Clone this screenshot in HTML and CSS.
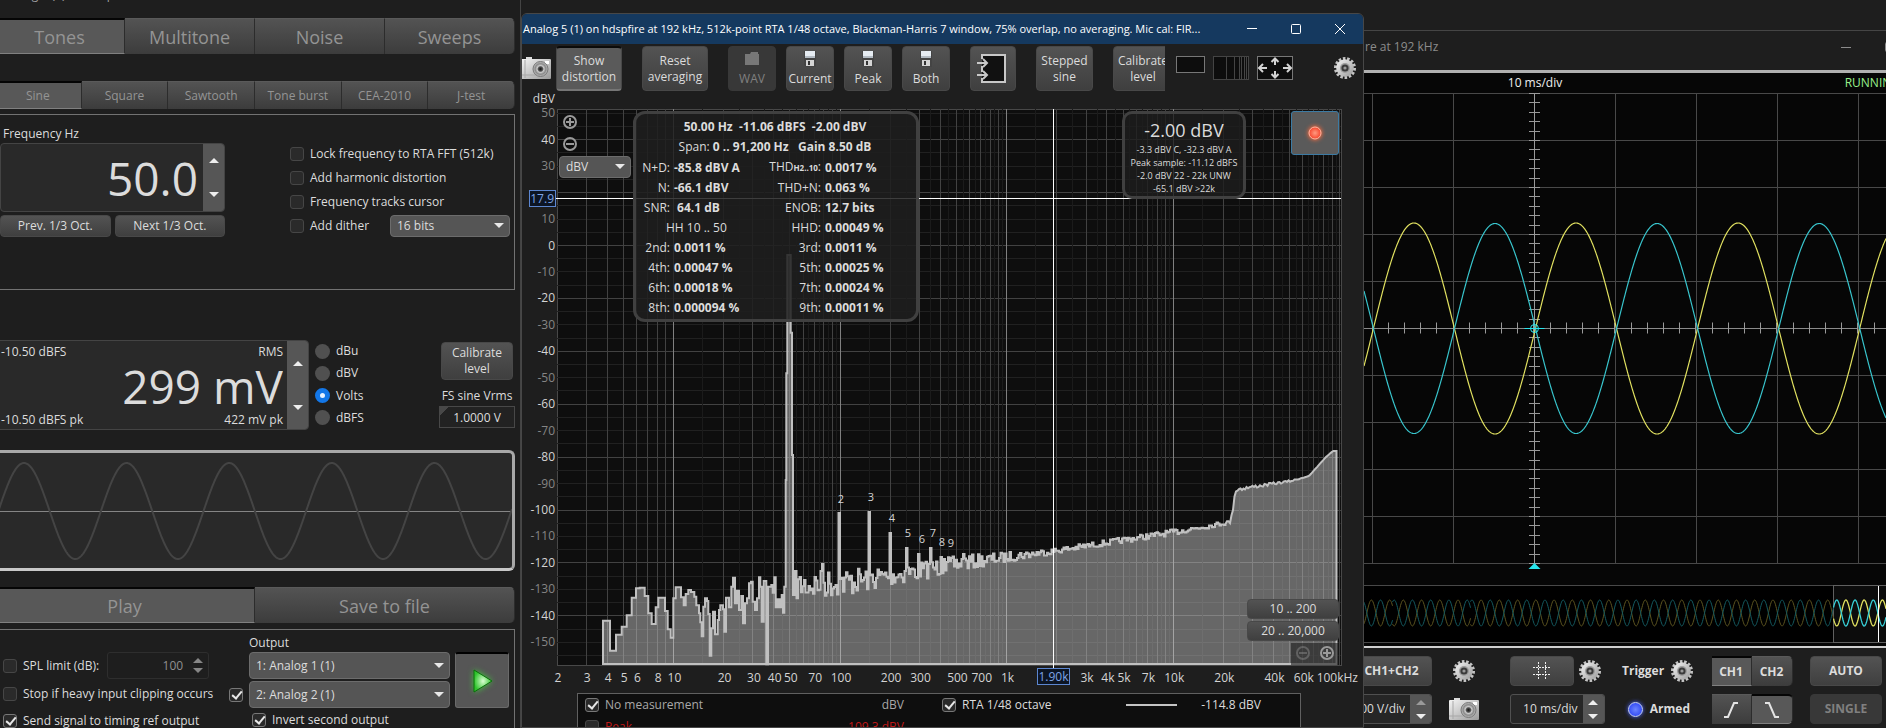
FILE: index.html
```html
<!DOCTYPE html>
<html lang="en">
<head>
  <meta charset="UTF-8" />
  <meta name="viewport" content="width=device-width, initial-scale=1.0" />
  <title>Generator / RTA / Scope</title>
  <link rel="stylesheet" href="styles.css">
</head>
<body>

<svg class="defs" aria-hidden="true">
  <defs>
    <linearGradient id="metal" x1="0" y1="0" x2="1" y2="1">
      <stop offset="0" stop-color="#f4f4f4" />
      <stop offset="1" stop-color="#9a9a9a" />
    </linearGradient>
    <radialGradient id="lens">
      <stop offset="0" stop-color="#111" />
      <stop offset="0.3" stop-color="#555" />
      <stop offset="0.45" stop-color="#ccc" />
      <stop offset="0.7" stop-color="#8a8a8a" />
      <stop offset="1" stop-color="#c4c4c4" />
    </radialGradient>
    <radialGradient id="green">
      <stop offset="0" stop-color="#d8ffd0" />
      <stop offset="1" stop-color="#2fc42c" />
    </radialGradient>
    <radialGradient id="red">
      <stop offset="0" stop-color="#ff9a80" />
      <stop offset="1" stop-color="#f5452c" />
    </radialGradient>
  </defs>
  <symbol id="gear" viewBox="0 0 24 24">
    <circle cx="12" cy="12" r="9.5" fill="none" stroke="#c4c4c4" stroke-width="3" pathLength="28" stroke-dasharray="1.2 0.8" />
    <circle cx="12" cy="12" r="8.8" fill="url(#metal)" />
    <circle cx="12" cy="12" r="5" fill="#9c9c9c" />
    <circle cx="12" cy="12" r="3.6" fill="#3a3a3a" />
    <circle cx="12" cy="12" r="1.6" fill="#999" />
  </symbol>
  <symbol id="camera" viewBox="0 0 30 22">
    <rect x="5" y="0" width="6" height="4" fill="#ddd" />
    <rect x="0" y="2" width="30" height="20" rx="1" fill="url(#metal)" />
    <path d="M4 3v18M0 18h30" stroke="#a8a8a8" fill="none" />
    <rect x="24" y="4" width="4" height="3" fill="#fff" />
    <circle cx="19.500" cy="12" r="7.500" fill="url(#lens)" stroke="#777" />
  </symbol>
  <symbol id="disk" viewBox="0 0 14 16">
    <path d="M1 0h12v16H3l-2-2z" fill="#444" />
    <rect x="2" y="0" width="10" height="7" fill="#e6ecf2" />
    <rect x="2" y="5" width="10" height="2" fill="#b4bcc4" />
    <rect x="3" y="9" width="8" height="6" fill="#d4d4d4" />
    <rect x="5" y="10" width="2" height="4" fill="#333" />
  </symbol>
</svg>

<main class="desktop">

  <!-- Signal generator -->
  <section class="generator">
    <div class="generator-title">Analog 1 (1) on hdspfire at 192 kHz</div>

    <div class="tabs tabs-big">
      <button class="tab active">Tones</button>
      <button class="tab">Multitone</button>
      <button class="tab">Noise</button>
      <button class="tab">Sweeps</button>
    </div>
    <div class="tabs tabs-small">
      <button class="tab active">Sine</button>
      <button class="tab">Square</button>
      <button class="tab">Sawtooth</button>
      <button class="tab">Tone burst</button>
      <button class="tab">CEA-2010</button>
      <button class="tab">J-test</button>
    </div>

    <div class="panel tone-panel">
      <div class="frequency">
        <label for="frequency">Frequency Hz</label>
        <div class="big-field">
          <input id="frequency" class="big-value" type="text" value="50.0">
          <div class="spinner"><button class="up" aria-label="Frequency up"></button><button class="down" aria-label="Frequency down"></button></div>
        </div>
        <div class="octaves">
          <button class="btn">Prev. 1/3 Oct.</button>
          <button class="btn">Next 1/3 Oct.</button>
        </div>
      </div>
      <div class="tone-options">
        <label class="check"><input type="checkbox">Lock frequency to RTA FFT (512k)</label>
        <label class="check"><input type="checkbox">Add harmonic distortion</label>
        <label class="check"><input type="checkbox">Frequency tracks cursor</label>
        <div class="dither">
          <label class="check"><input type="checkbox">Add dither</label>
          <div class="select"><select aria-label="Dither bits"><option>16 bits</option></select></div>
        </div>
      </div>
    </div>

    <div class="level">
      <div class="big-field level-field">
        <div class="level-text">
          <div class="level-row"><span>-10.50 dBFS</span><span>RMS</span></div>
          <input class="big-value" type="text" value="299 mV" aria-label="Level">
          <div class="level-row"><span>-10.50 dBFS pk</span><span>422 mV pk</span></div>
        </div>
        <div class="spinner"><button class="up" aria-label="Level up"></button><button class="down" aria-label="Level down"></button></div>
      </div>
      <div class="units">
        <label class="radio"><input type="radio" name="unit">dBu</label>
        <label class="radio"><input type="radio" name="unit">dBV</label>
        <label class="radio"><input type="radio" name="unit" checked>Volts</label>
        <label class="radio"><input type="radio" name="unit">dBFS</label>
      </div>
      <div class="calibration">
        <button class="btn">Calibrate<br>level</button>
        <label for="vrms">FS sine Vrms</label>
        <input id="vrms" type="text" value="1.0000 V">
      </div>
    </div>

    <div class="preview"><svg id="preview"></svg></div>

    <div class="tabs tabs-big tabs-play">
      <button class="tab active">Play</button>
      <button class="tab">Save to file</button>
    </div>

    <div class="panel play-panel">
      <div class="play-options">
        <div class="spl">
          <label class="check"><input type="checkbox">SPL limit (dB):</label>
          <div class="spl-field"><input type="text" value="100" aria-label="SPL limit" disabled><div class="mini-spin"><i class="up"></i><i class="down"></i></div></div>
        </div>
        <label class="check"><input type="checkbox">Stop if heavy input clipping occurs</label>
        <label class="check"><input type="checkbox" checked>Send signal to timing ref output</label>
      </div>
      <div class="outputs">
        <label class="output-label" for="output1">Output</label>
        <div class="select"><select id="output1"><option>1: Analog 1 (1)</option></select></div>
        <div class="second">
          <input type="checkbox" checked aria-label="Use second output">
          <div class="select"><select aria-label="Second output"><option>2: Analog 2 (1)</option></select></div>
        </div>
        <label class="check invert"><input type="checkbox" checked>Invert second output</label>
      </div>
      <button class="play" aria-label="Play">
        <svg width="36" height="36" viewBox="0 0 36 36"><path class="play-glow" d="M10 7v22l18-11z" /><path d="M10 7v22l18-11z" fill="url(#green)" stroke="#0a6e0a" /></svg>
      </button>
    </div>
  </section>

  <!-- RTA -->
  <section class="rta">
    <header class="titlebar">
      <h1>Analog 5 (1) on hdspfire at 192 kHz, 512k-point RTA 1/48 octave, Blackman-Harris 7 window, 75% overlap, no averaging. Mic cal: FIR...</h1>
      <div class="window-buttons">
        <button aria-label="Minimize"><svg width="12" height="12"><path d="M1 5.500h10" /></svg></button>
        <button aria-label="Maximize"><svg width="12" height="12"><rect x="1.500" y="1.500" width="9" height="9" rx="1" /></svg></button>
        <button aria-label="Close"><svg width="12" height="12"><path d="M1 1l10 10M11 1L1 11" /></svg></button>
      </div>
    </header>

    <div class="toolbar">
      <svg class="camera" width="30" height="22"><use href="#camera" /></svg>
      <button class="btn show active">Show<br>distortion</button>
      <button class="btn reset">Reset<br>averaging</button>
      <div class="files">
        <button class="btn file" disabled><svg width="16" height="16"><path d="M1 3h5l1-2h7v2h1v11H1z" fill="#777" /></svg>WAV</button>
        <button class="btn file"><svg width="14" height="16"><use href="#disk" /></svg>Current</button>
        <button class="btn file"><svg width="14" height="16"><use href="#disk" /></svg>Peak</button>
        <button class="btn file"><svg width="14" height="16"><use href="#disk" /></svg>Both</button>
      </div>
      <button class="btn input" aria-label="Input">
        <svg width="32" height="32"><rect x="5" y="2" width="24" height="28" fill="#111" /><path d="M5 6V2h23v27H5v-4M5 13v6" fill="none" stroke="#c8c8c8" stroke-width="2" /><path d="M0 10h9M6 6l4 4-4 4M0 22h9M6 18l4 4-4 4" fill="none" stroke="#c8c8c8" stroke-width="2" /></svg>
      </button>
      <button class="btn stepped">Stepped<br>sine</button>
      <div class="clipped"><button class="btn">Calibrate<br>level</button></div>
      <div class="views">
        <svg width="29" height="17"><rect x="0.500" y="0.500" width="28" height="16" fill="#0d0d0d" stroke="#777" /></svg>
        <svg width="36" height="24"><rect x="0.500" y="0.500" width="35" height="23" fill="#0d0d0d" stroke="#444" /><path d="M13.500 0v24M21.500 0v24M26.500 0v24M28.500 0v24M31.500 0v24M33.500 0v24" stroke="#444" /></svg>
        <svg width="36" height="24"><rect x="0.500" y="0.500" width="35" height="23" fill="#0d0d0d" stroke="#777" /><path d="M3 12h7M6 8l-4 4 4 4M33 12h-7M30 8l4 4-4 4M18 3v6M14.500 6L18 2.500 21.500 6M18 21v-6M14.500 18l3.500 3.500 3.500-3.500" fill="none" stroke="#d4d4d4" stroke-width="2" /></svg>
      </div>
      <svg class="settings" width="24" height="24"><use href="#gear" /></svg>
    </div>

    <div class="chart">
      <svg id="spectrum"></svg>

      <div class="y-tools">
        <button aria-label="Zoom in"><svg width="16" height="16"><circle cx="8" cy="8" r="6" /><path d="M8 4v8M4 8h8" /></svg></button>
        <button aria-label="Zoom out"><svg width="16" height="16"><circle cx="8" cy="8" r="6" /><path d="M4 8h8" /></svg></button>
        <div class="select"><select aria-label="Axis unit"><option>dBV</option></select></div>
      </div>

      <div class="distortion">
        <p><b>50.00 Hz&nbsp; -11.06 dBFS&nbsp; -2.00 dBV</b></p>
        <p>Span: <b>0 .. 91,200 Hz &nbsp; Gain 8.50 dB</b></p>
        <table>
          <tr><th>N+D:</th><td>-85.8 dBV A</td><th>THD<small>H2..10</small>:</th><td>0.0017 %</td></tr>
          <tr><th>N:</th><td>-66.1 dBV</td><th>THD+N:</th><td>0.063 %</td></tr>
          <tr><th>SNR:</th><td>&nbsp;64.1 dB</td><th>ENOB:</th><td>12.7 bits</td></tr>
          <tr><td class="range" colspan="2">HH 10 .. 50</td><th>HHD:</th><td>0.00049 %</td></tr>
          <tr><th>2nd:</th><td>0.0011 %</td><th>3rd:</th><td>0.0011 %</td></tr>
          <tr><th>4th:</th><td>0.00047 %</td><th>5th:</th><td>0.00025 %</td></tr>
          <tr><th>6th:</th><td>0.00018 %</td><th>7th:</th><td>0.00024 %</td></tr>
          <tr><th>8th:</th><td>0.000094 %</td><th>9th:</th><td>0.00011 %</td></tr>
        </table>
      </div>

      <div class="levels">
        <strong>-2.00 dBV</strong>
        <span>-3.3 dBV C, -32.3 dBV A</span>
        <span>Peak sample: -11.12 dBFS</span>
        <span>-2.0 dBV 22 - 22k UNW</span>
        <span>-65.1 dBV &gt;22k</span>
      </div>

      <button class="record" aria-label="Record"><svg width="24" height="24"><circle class="record-glow" cx="12" cy="12" r="7" /><circle cx="12" cy="12" r="6" fill="url(#red)" stroke="#ffb8a4" /></svg></button>

      <div class="ranges">
        <button class="btn">10 .. 200</button>
        <button class="btn">20 .. 20,000</button>
        <div class="x-zoom">
          <button class="dim" aria-label="Zoom out"><svg width="16" height="16"><circle cx="8" cy="8" r="6" /><path d="M4 8h8" /></svg></button>
          <button aria-label="Zoom in"><svg width="16" height="16"><circle cx="8" cy="8" r="6" /><path d="M8 4v8M4 8h8" /></svg></button>
        </div>
      </div>
    </div>

    <div class="legend">
      <label class="check muted"><input type="checkbox" checked>No measurement</label>
      <span class="reading muted">dBV</span>
      <label class="check"><input type="checkbox" checked>RTA 1/48 octave</label>
      <span class="swatch"></span>
      <span class="reading">-114.8 dBV</span>
      <label class="check peak"><input type="checkbox">Peak</label>
      <span class="reading peak">-109.3 dBV</span>
    </div>
  </section>

  <!-- Oscilloscope -->
  <section class="scope">
    <header class="scope-title">
      <h2>re at 192 kHz</h2>
      <button aria-label="Minimize"><svg width="12" height="12"><path d="M1 6.500h10" /></svg></button>
      <button aria-label="Maximize"><svg width="12" height="12"><rect x="1.500" y="1.500" width="9" height="9" rx="1" /></svg></button>
    </header>
    <div class="screen">
      <div class="screen-head"><span>10 ms/div</span><span class="running">RUNNING</span></div>
      <svg id="scope"></svg>
      <svg id="overview"></svg>
    </div>
    <div class="scope-controls">
      <div class="group group-a">
        <button class="btn sum">CH1+CH2</button>
        <svg class="icon" width="24" height="24"><use href="#gear" /></svg>
        <div class="step-field volts"><input type="text" value="100 V/div" aria-label="Volts per division"><div class="spinner"><button class="up dim" aria-label="Up"></button><button class="down" aria-label="Down"></button></div></div>
        <svg class="icon" width="30" height="22"><use href="#camera" /></svg>
      </div>
      <div class="group group-b">
        <div class="line">
          <button class="btn grid-btn" aria-label="Grid"><svg width="18" height="18"><path d="M5.500 0v18M12.500 0v18M0 5.500h18M0 12.500h18" stroke="#eee" stroke-dasharray="2 1" /></svg></button>
          <svg width="24" height="24"><use href="#gear" /></svg>
        </div>
        <div class="step-field"><input type="text" value="10 ms/div" aria-label="Time per division"><div class="spinner"><button class="up" aria-label="Up"></button><button class="down" aria-label="Down"></button></div></div>
      </div>
      <div class="group group-c">
        <div class="line"><b>Trigger</b><svg width="24" height="24"><use href="#gear" /></svg></div>
        <div class="line armed"><i class="led"></i><b>Armed</b></div>
      </div>
      <div class="group group-d">
        <div class="pair"><button class="tab active">CH1</button><button class="tab">CH2</button></div>
        <div class="pair">
          <button class="tab" aria-label="Rising edge"><svg width="16" height="16"><path d="M1 15h4L11 1h4" /></svg></button>
          <button class="tab active" aria-label="Falling edge"><svg width="16" height="16"><path d="M1 1h4l6 14h4" /></svg></button>
        </div>
      </div>
      <div class="group group-e">
        <button class="btn">AUTO</button>
        <button class="btn" disabled>SINGLE</button>
      </div>
    </div>
  </section>

</main>

<script src="script.js"></script>
</body>
</html>
```
FILE: styles.css
```css
* {
  box-sizing: border-box;
}
body {
  margin: 0;
  height: 100vh;
  overflow: hidden;
  background: #1e1e1e;
  color: #dcdcdc;
  font-family: "Open Sans", "Noto Sans", sans-serif;
  font-size: 12px;
  line-height: 16px;
}
h1, h2, p {
  margin: 0;
  font-size: 12px;
  font-weight: normal;
}
svg {
  display: block;
  flex: none;
}
button, input, select {
  font: inherit;
  color: inherit;
  margin: 0;
  padding: 0;
  border: none;
  background: none;
  min-width: 0;
}
.defs {
  position: absolute;
  width: 0;
  height: 0;
}
.desktop {
  display: grid;
  grid-template-columns: minmax(0, 521fr) minmax(0, 843fr) minmax(0, 522fr);
  height: 100vh;
  overflow: hidden;
}

/* shared controls */
.btn {
  border-radius: 4px;
  background: linear-gradient(#535353, #3f3f3f);
  border: 1px solid #484848;
  white-space: nowrap;
}
.btn:disabled {
  color: #808080;
  background: #383838;
  border-color: #383838;
}
.btn.active {
  background: #5a5a5a;
  border-top: 2px solid #0a0a0a;
  border-bottom: 2px solid #767676;
}
.tab {
  background: linear-gradient(#535353, #3c3c3c);
  border-top: 1px solid #5a5a5a;
  border-right: 1px solid #2c2c2c;
}
.tab:last-child {
  border-radius: 0 5px 5px 0;
}
.tab.active {
  background: #585858;
  border-top: 2px solid #050505;
  border-bottom: 1px solid #808080;
}
.tabs {
  display: grid;
  grid-auto-flow: column;
  grid-auto-columns: 1fr;
  color: #949494;
}
.tabs-big {
  height: 36px;
  font-size: 18px;
}
.tabs-small {
  height: 28px;
  margin: 27px 0 5px;
}
.check, .radio {
  display: flex;
  align-items: center;
  gap: 6px;
  white-space: nowrap;
}
input[type=checkbox] {
  appearance: none;
  flex: none;
  width: 14px;
  height: 14px;
  border: 1px solid #464646;
  border-radius: 3px;
  background: #2a2a2a;
}
input[type=checkbox]:checked {
  border-color: #777;
}
input[type=checkbox]:checked::before {
  content: "";
  display: block;
  width: 4px;
  height: 8px;
  margin: 0 0 0 4px;
  border: solid #e8e8e8;
  border-width: 0 2px 2px 0;
  transform: rotate(40deg);
}
input[type=radio] {
  appearance: none;
  flex: none;
  width: 15px;
  height: 15px;
  border-radius: 50%;
  background: #505050;
}
input[type=radio]:checked {
  background: #e8f2ff;
  border: 5px solid #1377e8;
}
.select {
  position: relative;
  border: 1px solid #6c6c6c;
  border-radius: 4px;
  background: #555;
}
.select select {
  appearance: none;
  display: block;
  width: 100%;
  height: 100%;
  padding: 0 20px 0 6px;
}
.select::after {
  content: "";
  position: absolute;
  right: 5px;
  top: 50%;
  margin-top: -3px;
  border: 5px solid transparent;
  border-top-color: #e8e8e8;
  border-bottom: none;
}
.spinner {
  display: flex;
  flex-direction: column;
  flex: none;
  width: 21px;
  background: #565656;
}
.spinner button {
  flex: 1;
  display: grid;
  place-items: center;
}
.up::before, .down::before {
  content: "";
  display: block;
  border: 5px solid transparent;
}
.up::before {
  border-bottom-color: #eee;
  border-top: none;
}
.down::before {
  border-top-color: #eee;
  border-bottom: none;
}
.panel {
  border: 1px solid #727272;
}

/* generator */
.generator {
  margin-left: -5px;
  padding-right: 5px;
  border-right: 1px solid #444;
  overflow: hidden;
}
.generator-title {
  height: 18px;
  margin-top: -13px;
  margin-bottom: 13px;
  padding-left: 5px;
  color: #a0a0a0;
}
.tone-panel {
  display: flex;
  justify-content: space-between;
  height: 176px;
  padding: 11px 4px 0;
}
.frequency {
  width: 225px;
}
.frequency label {
  display: block;
  height: 17px;
  padding-left: 3px;
}
.big-field {
  display: flex;
  height: 69px;
  border: 1px solid #444;
  border-radius: 4px;
  background: #292929;
  overflow: hidden;
}
.big-value {
  flex: 1;
  width: 100%;
  padding-right: 5px;
  text-align: right;
  font-size: 46px;
  line-height: 50px;
}
.octaves {
  display: grid;
  grid-template-columns: 1fr 1fr;
  gap: 4px;
  height: 22px;
  margin-top: 3px;
}
.tone-options {
  width: 220px;
  padding-top: 16px;
}
.tone-options .check {
  height: 24px;
}
.dither {
  display: flex;
  align-items: center;
  justify-content: space-between;
}
.dither .select {
  width: 120px;
  height: 22px;
}
.level {
  display: flex;
  gap: 6px;
  height: 90px;
  margin: 50px 0 20px;
}
.level-field {
  flex: 1;
  height: 90px;
}
.level-text {
  flex: 1;
  display: flex;
  flex-direction: column;
  padding: 3px 4px 0 5px;
}
.level-text .big-value {
  flex: none;
  height: 52px;
  padding: 0;
}
.level-row {
  display: flex;
  justify-content: space-between;
}
.units {
  width: 118px;
  display: flex;
  flex-direction: column;
  justify-content: space-between;
  padding: 3px 0 4px;
}
.calibration {
  width: 76px;
  display: flex;
  flex-direction: column;
  align-items: center;
  padding-top: 2px;
}
.calibration .btn {
  width: 72px;
  height: 38px;
}
.calibration label {
  margin: 8px 0 2px;
  white-space: nowrap;
}
.calibration input {
  width: 100%;
  height: 22px;
  border: 1px solid #484848;
  background: linear-gradient(135deg, #484848 6px, #222 6px);
  text-align: center;
}
.preview {
  height: 121px;
  border: 3px solid #a8a8a8;
  border-bottom-color: #c8c8c8;
  border-radius: 6px;
  background: #292929;
}
#preview {
  width: 100%;
  height: 115px;
}
.tabs-play {
  margin: 16px 0 6px;
}
.play-panel {
  display: flex;
  height: 140px;
  padding: 5px 5px 0 7px;
}
.play-options {
  flex: 1;
  padding-top: 17px;
}
.play-options .check {
  height: 24px;
}
.play-options > .check {
  margin-top: 3px;
}
.spl {
  display: flex;
  align-items: center;
  gap: 8px;
  height: 27px;
}
.spl-field {
  display: flex;
  align-items: center;
  width: 102px;
  height: 27px;
  padding-right: 5px;
  border: 1px solid #2e2e2e;
  border-radius: 3px;
  color: #909090;
}
.spl-field input {
  flex: 1;
  padding-right: 10px;
  text-align: right;
}
.mini-spin {
  display: grid;
  gap: 5px;
  opacity: 0.5;
}
.outputs {
  width: 221px;
  padding-left: 20px;
}
.output-label {
  display: block;
  height: 17px;
}
.outputs .select {
  height: 27px;
}
.second {
  display: flex;
  align-items: center;
  gap: 6px;
  margin: 2px 0 0 -20px;
}
.second .select {
  flex: 1;
}
.invert {
  height: 24px;
  padding-left: 3px;
}
.play {
  display: grid;
  place-items: center;
  width: 54px;
  height: 56px;
  margin: 17px 0 0 5px;
  border: 1px solid #6a6a6a;
  border-top: 2px solid #000;
  border-radius: 3px;
  background: #565656;
}
.play-glow {
  fill: #3fd43a;
  filter: blur(3px);
}

/* RTA */
.rta {
  margin-top: 13px;
  border: 1px solid #474747;
  border-radius: 6px 6px 0 0;
  background: #1e1e1e;
  overflow: hidden;
}
.titlebar {
  display: flex;
  align-items: center;
  justify-content: space-between;
  height: 30px;
  padding: 0 1px;
  background: #15395f;
  color: #fff;
}
.titlebar h1 {
  font-size: 11px;
  white-space: nowrap;
}
.window-buttons {
  display: flex;
  flex: none;
}
.window-buttons button {
  width: 44px;
  display: grid;
  place-items: center;
}
.window-buttons svg, .scope-title svg {
  fill: none;
  stroke: currentColor;
}
.toolbar {
  display: flex;
  align-items: flex-start;
  height: 48px;
  padding-top: 2px;
}
.toolbar .btn {
  height: 45px;
}
.toolbar .camera {
  margin: 11px 5px 0 -1px;
}
.show, .reset {
  width: 66px;
}
.reset {
  margin: 0 20px;
}
.files {
  display: flex;
  gap: 10px;
}
.file {
  width: 48px;
  display: flex;
  flex-direction: column;
  align-items: center;
  gap: 4px;
  padding-top: 4px;
}
.input {
  display: grid;
  place-items: center;
  width: 46px;
  margin: 0 20px;
}
.stepped {
  width: 57px;
}
.clipped {
  width: 52px;
  margin-left: 20px;
  overflow: hidden;
}
.clipped .btn {
  width: 60px;
}
.views {
  display: flex;
  gap: 8px;
  margin: 10px 0 0 11px;
}
.settings {
  margin: 10px 6px 0 auto;
}
.chart {
  position: relative;
}
#spectrum {
  width: 100%;
  height: 596px;
}
#spectrum text {
  fill: #d4d4d4;
}
#spectrum text.dim {
  fill: #858585;
}
#spectrum text.cursor {
  fill: #7ea4e6;
}
.y-tools {
  position: absolute;
  left: 37px;
  top: 20px;
  display: flex;
  flex-direction: column;
  gap: 2px;
}
.y-tools button, .x-zoom button {
  width: 22px;
  height: 20px;
  display: grid;
  place-items: center;
}
.y-tools button svg, .x-zoom svg {
  fill: none;
  stroke: #9a9a9a;
  stroke-width: 2;
}
.x-zoom .dim {
  opacity: 0.4;
}
.y-tools .select {
  width: 72px;
  height: 22px;
}
.distortion {
  position: absolute;
  left: 111px;
  top: 19px;
  width: 286px;
  height: 211px;
  padding: 3px 0 0 2px;
  border: 3px solid #404040;
  border-radius: 12px;
  background: rgba(30, 30, 30, 0.86);
}
.distortion p {
  height: 20px;
  line-height: 20px;
  text-align: center;
  padding-right: 4px;
}
.distortion table {
  width: 100%;
  table-layout: fixed;
  border-collapse: collapse;
}
.distortion th, .distortion td {
  height: 20px;
  padding: 0;
  line-height: 20px;
  white-space: nowrap;
  text-align: left;
  font-weight: bold;
}
.distortion th {
  padding-right: 4px;
  text-align: right;
  font-weight: normal;
}
.distortion tr:first-child th:nth-child(1) {
  width: 36px;
}
.distortion tr:first-child th:nth-child(3) {
  width: 60px;
}
.distortion td.range {
  padding-left: 28px;
  font-weight: normal;
}
.distortion small {
  font-size: 8px;
  font-weight: bold;
}
.levels {
  position: absolute;
  right: 117px;
  top: 19px;
  width: 124px;
  height: 88px;
  display: flex;
  flex-direction: column;
  align-items: center;
  padding-top: 3px;
  border: 3px solid #404040;
  border-radius: 10px;
  background: rgba(30, 30, 30, 0.8);
  font-size: 9px;
  line-height: 13px;
  white-space: nowrap;
}
.levels strong {
  font-size: 18px;
  line-height: 26px;
  font-weight: normal;
}
.record {
  position: absolute;
  right: 24px;
  top: 19px;
  display: grid;
  place-items: center;
  width: 48px;
  height: 44px;
  border: 1px solid #3c7ba4;
  border-radius: 3px;
  background: #5a5a5a;
}
.record-glow {
  fill: #ff6a3c;
  filter: blur(2px);
}
.ranges {
  position: absolute;
  right: 24px;
  top: 507px;
  width: 92px;
  display: flex;
  flex-direction: column;
  gap: 2px;
}
.ranges > .btn {
  height: 20px;
}
.x-zoom {
  display: flex;
  align-self: flex-end;
  justify-content: space-around;
  width: 48px;
  height: 22px;
  background: rgba(30, 30, 30, 0.6);
}
.legend {
  display: grid;
  grid-template-columns: 1fr 60px 38px 184px 60px 75px 39px;
  align-items: center;
  grid-auto-rows: 22px;
  height: 60px;
  margin: 5px 62px 0 55px;
  padding-left: 7px;
  border: 1px solid #606060;
  background: #0e0e0e;
}
.reading {
  text-align: right;
}
.legend > :nth-child(3) {
  grid-column: 4;
}
.legend > :nth-child(6) {
  grid-column: 1;
}
.swatch {
  width: 51px;
  height: 2px;
  background: #c4c4c4;
}
.muted {
  color: #a8a8a8;
}
.peak {
  color: #c01818;
}

/* scope */
.scope {
  margin-top: 30px;
  border-top: 1px solid #454545;
  overflow: hidden;
}
.scope-title {
  display: flex;
  align-items: center;
  height: 39px;
  margin-right: -26px;
  padding: 0 0 7px 1px;
  color: #8c8c8c;
}
.scope-title h2 {
  flex: 1;
}
.scope-title button {
  width: 44px;
  display: grid;
  place-items: center;
}
.screen {
  border-top: 3px solid #b0b0b0;
  border-bottom: 2px solid #d0d0d0;
  background: #060606;
}
.screen-head {
  display: grid;
  grid-template-columns: 342px 1fr;
  height: 20px;
  line-height: 20px;
  color: #eee;
}
.screen-head span:first-child {
  text-align: center;
}
.screen-head .running {
  margin-right: -14px;
  text-align: right;
  color: #98f08c;
}
#scope {
  width: 100%;
  height: 492px;
}
#overview {
  width: 100%;
  height: 61px;
}
.scope-controls {
  display: flex;
  justify-content: space-between;
  height: 82px;
  padding: 8px 4px 0 0;
}
.scope-controls .btn, .scope-controls .tab {
  height: 30px;
  font-weight: bold;
}
.group {
  display: grid;
  grid-template-rows: 30px 30px;
  row-gap: 8px;
  align-items: center;
}
.group-a {
  grid-template-columns: 81px 30px;
  column-gap: 17px;
  margin: 0 13px 0 -13px;
}
.icon {
  justify-self: center;
}
.step-field {
  display: flex;
  width: 95px;
  height: 30px;
  border: 1px solid #505050;
  border-radius: 3px;
  background: #262626;
  overflow: hidden;
}
.step-field input {
  flex: 1;
  padding-right: 5px;
  text-align: right;
}
.volts {
  width: 81px;
}
.up.dim {
  opacity: 0.45;
}
.grid-btn {
  display: grid;
  place-items: center;
  width: 64px;
}
.line {
  display: flex;
  align-items: center;
  gap: 4px;
}
.group-c {
  width: 72px;
}
.group-c .line {
  justify-content: space-between;
}
.group-c .armed {
  padding: 0 4px 0 6px;
}
.led {
  width: 15px;
  height: 15px;
  border: 1px solid #c8d4ff;
  border-radius: 50%;
  background: radial-gradient(#6c84ff, #2038f0);
  box-shadow: 0 0 4px #4a64ff;
}
.pair {
  display: grid;
  grid-template-columns: 40px 41px;
}
.pair .tab {
  display: grid;
  place-items: center;
}
.pair svg {
  fill: none;
  stroke: #e4e4e4;
  stroke-width: 2;
}
.group-e .btn {
  width: 72px;
}
```
FILE: script.js
```js
const NS = "http://www.w3.org/2000/svg";

function add(svg, tag, attrs, text) {
  const el = document.createElementNS(NS, tag);
  for (const key in attrs) el.setAttribute(key, attrs[key]);
  if (text !== undefined) el.textContent = text;
  svg.appendChild(el);
  return el;
}

function line(svg, x1, y1, x2, y2, stroke, width) {
  add(svg, "line", { x1, y1, x2, y2, stroke, "stroke-width": width || 1 });
}

function sine(from, to, period, peakX, mid, amp) {
  let d = "";
  for (let x = from; x <= to; x += 0.5) {
    const y = mid - amp * Math.cos((x - peakX) / period * 2 * Math.PI);
    d += (d ? "L" : "M") + x.toFixed(1) + " " + y.toFixed(2);
  }
  return d;
}

// generator preview
function drawPreview() {
  const svg = document.getElementById("preview");
  svg.replaceChildren();
  const w = svg.clientWidth;
  line(svg, 0, 58.5, w, 58.5, "#858585");
  add(svg, "path", { d: sine(0, w, w / 5.01, 26, 58, 48), fill: "none", stroke: "#444", "stroke-width": 2 });
}

// low frequency bins: start x, level y (thirds of a pixel)
const bins = [
  252,902, 273,992, 291,944, 308,920, 323,886, 338,833, 351,805, 362,803, 377,828, 388,880,
  398,912, 410,862, 418,833, 438,873, 446,928, 455,953, 463,835, 470,802, 486,832, 494,856,
  500,822, 508,810, 516,816, 526,830, 532,856, 540,880, 544,907, 548,949, 553,860, 558,835,
  564,843, 568,882, 572,1007, 577,925, 582,875, 588,943, 596,900, 600,870, 604,856, 612,868,
  616,935, 621,833, 630,862, 637,800, 642,773, 648,850, 654,812, 660,870, 667,828, 672,910,
  678,850, 684,835, 690,790, 696,785, 701,845, 708,870, 714,835, 720,772, 724,800, 728,905,
  734,783, 742,1033, 747,800, 757,795, 761,818, 766,772, 770,862, 776,838, 782,862, 788,825,
  792,878, 796,800, 800,480, 802,160, 805,-195, 815,38, 819,405, 822,825
];
// noise floor: x, y, spread
const floor = [
  [236, 477, 15], [290, 473, 14], [330, 467, 11], [372, 460, 9], [405, 454, 8], [450, 448, 5],
  [497, 442, 3], [617, 423, 3], [673, 413, 2], [676, 401, 0], [678, 383, 0], [682, 380, 2],
  [734, 372, 1], [752, 367, 0], [769, 348, 0], [776, 342, 0], [780, 342, 0]
];
const harmonics = [
  [265, 455], [282, 404, 2, 283, 391], [312, 403, 3, 313, 389], [332, 424, 4, 334, 410],
  [349, 439, 5, 350, 425], [361, 445, 6, 364, 431], [373, 439, 7, 375, 425],
  [383, 448, 8, 384, 434], [387, 450, 9, 393, 435], [406, 445]
];

function trace() {
  const pts = [];
  for (let i = 0; i < bins.length; i += 2) pts.push([bins[i] / 3 - 38, bins[i + 1] / 3 + 211]);
  let seed = 7;
  for (let x = 238; x < 780; x += 1.5) {
    seed = (seed * 16807) % 2147483647;
    const rnd = seed / 2147483647 * 2 - 1;
    let i = 0;
    while (i < floor.length - 2 && floor[i + 1][0] < x) i++;
    const a = floor[i], b = floor[i + 1];
    const t = (x - a[0]) / (b[0] - a[0]);
    let y = a[1] + (b[1] - a[1]) * t + rnd * (a[2] + (b[2] - a[2]) * t);
    harmonics.forEach(h => {
      if (Math.abs(x - h[0]) <= 0.75) y = h[1];
    });
    pts.push([x, y]);
  }
  return pts;
}

function drawSpectrum() {
  const svg = document.getElementById("spectrum");
  svg.replaceChildren();
  const x0 = 35, y0 = 17, h = 556;
  const w = svg.clientWidth - 57, k = w / 784;
  const px = hz => x0 + (116.4 + 166.6 * Math.log10(hz / 10)) * k;
  const py = db => 153.5 - 2.645 * db;
  const snap = v => Math.floor(v) + 0.5;

  add(svg, "rect", { x: x0 + 0.5, y: y0 + 0.5, width: w, height: h, fill: "#0e0e0e", stroke: "#484848" });
  for (let db = 50; db > -158; db -= 5) {
    const y = snap(py(db));
    line(svg, x0, y, x0 + w, y, db % 20 === 0 ? "#424242" : "#212121");
  }
  for (let dec = 1; dec <= 100000; dec *= 10) {
    for (let n = 1; n < 10; n++) {
      if (dec * n <= 2 || dec * n > 101000) continue;
      const x = snap(px(dec * n));
      line(svg, x, y0, x, y0 + h, n === 1 && dec < 100000 ? "#808080" : "#424242");
      if (dec === 100000) break;
      const half = snap(px(dec * (n + 0.5)));
      if (dec > 1) line(svg, half, y0, half, y0 + h, "#1b1b1b");
    }
  }

  const bottom = y0 + h - 1;
  const pts = trace();
  let d = `M${x0 + pts[0][0] * k} ${bottom}`;
  pts.forEach(p => {
    if (p[0] < 670) d += `H${(x0 + p[0] * k).toFixed(1)}V${(y0 + p[1]).toFixed(1)}`;
    else d += `L${(x0 + p[0] * k).toFixed(1)} ${(y0 + p[1]).toFixed(1)}`;
  });
  d += `V${bottom}Z`;
  add(svg, "path", { d, fill: "#c8c8c8", "fill-opacity": 0.48, stroke: "#c0c0c0", "stroke-width": 2 });

  harmonics.forEach(n => {
    if (n[2]) add(svg, "text", { x: x0 + n[3] * k + 1, y: y0 + n[4] + 3, "text-anchor": "middle", "font-size": 11 }, n[2]);
  });

  for (let db = 50; db >= -150; db -= 10) {
    if (db !== 20) add(svg, "text", { x: 33, y: py(db) + 4, "text-anchor": "end", class: db % 20 ? "dim" : "" }, db);
  }
  add(svg, "text", { x: 33, y: 11, "text-anchor": "end" }, "dBV");

  const freqs = [[2, "2"], [3, "3"], [4, "4"], [5, "5"], [6, "6"], [8, "8"], [10, "10"], [20, "20"], [30, "30"],
    [40, "40"], [50, "50"], [70, "70"], [100, "100"], [200, "200"], [300, "300"], [500, "500"], [700, "700"],
    [1e3, "1k"], [3e3, "3k"], [4e3, "4k"], [5e3, "5k"], [7e3, "7k"], [1e4, "10k"], [2e4, "20k"], [4e4, "40k"], [6e4, "60k"]];
  freqs.forEach(f => add(svg, "text", { x: px(f[0]) + 1, y: 590, "text-anchor": "middle" }, f[1]));
  add(svg, "text", { x: x0 + w + 17, y: 590, "text-anchor": "end" }, "100kHz");

  // cursor
  const cx = snap(px(1905)), cy = 106.5;
  line(svg, cx, y0, cx, 576, "#fff");
  line(svg, x0 - 2, cy, x0 + w, cy, "#fff");
  add(svg, "rect", { x: 7.5, y: 98.5, width: 26, height: 16, fill: "#0c1524", stroke: "#5c86d0" });
  add(svg, "text", { x: 32, y: 111, "text-anchor": "end", class: "cursor" }, "17.9");
  add(svg, "rect", { x: cx - 16, y: 576.5, width: 32, height: 16, fill: "#0c1524", stroke: "#5c86d0" });
  add(svg, "text", { x: cx, y: 589, "text-anchor": "middle", class: "cursor" }, "1.90k");
}

function drawScope() {
  const svg = document.getElementById("scope");
  svg.replaceChildren();
  const w = svg.clientWidth, div = 81, cx = 170.5, mid = 234.5;
  for (let i = 0; i <= 10; i++) line(svg, 0, i * 47 + 0.5, w, i * 47 + 0.5, i === 5 ? "#8a8a8a" : "#484848");
  for (let x = cx - 2 * div; x < w; x += div) {
    line(svg, x, 0, x, 470, x === cx ? "#9a9a9a" : "#484848");
  }
  for (let i = 0; i <= 50; i++) {
    const y = Math.round(i * 9.4) + 0.5;
    line(svg, cx - 5.5, y, cx + 5.5, y, "#9a9a9a");
  }
  for (let x = cx - 10 * 16.2; x < w; x += 16.2) {
    const gx = Math.round(x) - 0.5;
    line(svg, gx, mid - 5, gx, mid + 6, "#9a9a9a");
  }
  add(svg, "path", { d: sine(0, w, 162.1, 212, mid + 1, 105.5), fill: "none", stroke: "#e0e060", "stroke-width": 1.2 });
  add(svg, "path", { d: sine(0, w, 162.1, 131, mid + 1, 105), fill: "none", stroke: "#38c4cc", "stroke-width": 1.2 });
  add(svg, "circle", { cx, cy: mid + 1, r: 4, fill: "none", stroke: "#28e4ec" });
  line(svg, cx - 10, mid + 1, cx + 10, mid + 1, "#28e4ec");
  add(svg, "path", { d: `M${cx} 470l6 6h-12z`, fill: "#28e4ec" });
}

function drawOverview() {
  const svg = document.getElementById("overview");
  svg.replaceChildren();
  const w = svg.clientWidth, view = w - 52.5, mid = 28;
  add(svg, "rect", { x: -1, y: 0.5, width: w + 2, height: 57, fill: "#000", stroke: "#484848" });
  add(svg, "rect", { x: view, y: 0.5, width: 60, height: 57, fill: "#0c0c0c", stroke: "#606060" });
  // the recorded history has two breaks in phase
  const parts = [[0, 28.5, 7.4], [28.5, 106.5, 39.3], [106.5, view, 117.1]];
  parts.forEach(p => {
    add(svg, "path", { d: sine(p[0], p[1], 18.24, p[2], mid, 13), fill: "none", stroke: "#5c5420" });
    add(svg, "path", { d: sine(p[0], p[1], 18.24, p[2] - 9.12, mid, 13), fill: "none", stroke: "#145a60" });
  });
  add(svg, "path", { d: sine(view, w, 18.24, 117.1, mid, 13), fill: "none", stroke: "#e0e060", "stroke-width": 1.3 });
  add(svg, "path", { d: sine(view, w, 18.24, 108, mid, 13), fill: "none", stroke: "#38d0d8", "stroke-width": 1.3 });
  line(svg, w - 7.5, 1, w - 7.5, 57, "#fff");
}

function draw() {
  drawPreview();
  drawSpectrum();
  drawScope();
  drawOverview();
}

window.addEventListener("resize", draw);
draw();
```
